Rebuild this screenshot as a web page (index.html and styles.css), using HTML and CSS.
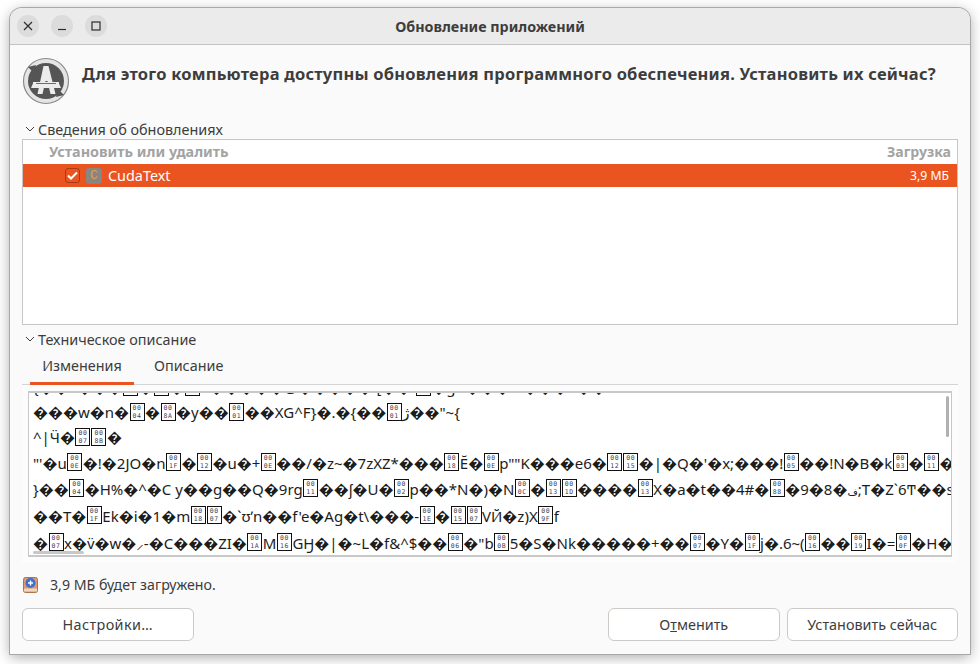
FILE: index.html
```html
<!DOCTYPE html>
<html lang="ru">
<head>
<meta charset="utf-8">
<title>Обновление приложений</title>
<link rel="stylesheet" href="styles.css">
</head>
<body>
<div class="window">
  <header class="titlebar">
    <div class="wm">
      <button class="wm-btn"><svg width="10" height="10" viewBox="0 0 10 10"><path d="M1 1l8 8M9 1l-8 8" class="wm-line"/></svg></button>
      <button class="wm-btn"><svg width="10" height="10" viewBox="0 0 10 10"><path d="M1 8.5h8" class="wm-line"/></svg></button>
      <button class="wm-btn"><svg width="10" height="10" viewBox="0 0 10 10"><rect x="1" y="1" width="8" height="8" class="wm-line"/></svg></button>
    </div>
    <div class="title">Обновление приложений</div>
  </header>
  <main class="content">
    <div class="head">
      <svg class="logo" width="48" height="48" viewBox="0 0 48 48">
        <circle cx="24" cy="24" r="22.5" fill="#e4e4e4" stroke="#8a8a8a" stroke-width="1.2"/>
        <circle cx="24" cy="24" r="18" fill="#555"/>
        <path d="M6 10l8-2-2 8zM42 38l-8 2 2-8z" fill="#555"/>
        <path d="M21.500 9h5l7 28h-5l-3-13h-2l-3 13h-5z" fill="#ececec"/>
        <path d="M11 25h26v1.500l2 4.500h-30l2-4.500z" fill="#ececec"/>
        <path d="M14 26.500h20" stroke="#d8432a" stroke-width="1"/>
      </svg>
      <h1 class="heading">Для этого компьютера доступны обновления программного обеспечения. Установить их сейчас?</h1>
    </div>

    <div class="expander expander-first">
      <svg class="chev" width="10" height="6" viewBox="0 0 10 6"><path d="M1 1l4 4 4-4"/></svg>
      <span>Сведения об обновлениях</span>
    </div>
    <section class="tree">
      <div class="tree-head">
        <span class="col-name">Установить или удалить</span>
        <span class="col-size">Загрузка</span>
      </div>
      <div class="tree-row">
        <span class="check"><svg width="11" height="9" viewBox="0 0 11 9"><path d="M1 4.500l3 3 6-6" fill="none" stroke="#fff" stroke-width="2"/></svg></span>
        <span class="pkg">C</span>
        <span class="pkg-name">CudaText</span>
        <span class="pkg-size">3,9 МБ</span>
      </div>
    </section>

    <div class="expander expander-second">
      <svg class="chev" width="10" height="6" viewBox="0 0 10 6"><path d="M1 1l4 4 4-4"/></svg>
      <span>Техническое описание</span>
    </div>
    <nav class="tabs">
      <span class="tab tab-active">Изменения</span>
      <span class="tab">Описание</span>
    </nav>
    <section class="notebook">
      <div class="log">
        <div class="lines">
          <div class="ln ln0">{��=���<span class="hx"><i>00</i><i>13</i></span>�<span class="hx"><i>00</i><i>05</i></span>�<span class="hx"><i>00</i><i>10</i></span>=�����@�����.[��.<span class="hx"><i>00</i><i>1A</i></span>�gC���=.���~��</div>
          <div class="ln ln1">���w�n�<span class="hx"><i>00</i><i>04</i></span>�<span class="hx"><i>00</i><i>8A</i></span>�y��<span class="hx"><i>00</i><i>01</i></span>��XG^F}�.�{��<span class="hx"><i>00</i><i>01</i></span><bdi>ژ</bdi>��"~{</div>
          <div class="ln ln2">^|Ӵ�<span class="hx"><i>00</i><i>07</i></span><span class="hx"><i>00</i><i>8B</i></span>�</div>
          <div class="ln ln3">"'�u<span class="hx"><i>00</i><i>0E</i></span>�!�2JO�n<span class="hx"><i>00</i><i>1F</i></span>�<span class="hx"><i>00</i><i>12</i></span>�u�+<span class="hx"><i>00</i><i>0E</i></span>��/�z~�7zXZ*���<span class="hx"><i>00</i><i>18</i></span>Ĕ�<span class="hx"><i>00</i><i>0E</i></span>p""K���e6�<span class="hx"><i>00</i><i>12</i></span><span class="hx"><i>00</i><i>15</i></span>�|�Q�'�x;���!<span class="hx"><i>00</i><i>05</i></span>��!N�B�k<span class="hx"><i>00</i><i>03</i></span>�<span class="hx"><i>00</i><i>11</i></span>�</div>
          <div class="ln">}��<span class="hx"><i>00</i><i>04</i></span>�H%�^�C y��g��Q�9rg<span class="hx"><i>00</i><i>11</i></span>��ʃ�U�<span class="hx"><i>00</i><i>02</i></span>p��*N�)�N<span class="hx"><i>00</i><i>0C</i></span>�<span class="hx"><i>00</i><i>13</i></span><span class="hx"><i>00</i><i>1D</i></span>����<span class="hx"><i>00</i><i>13</i></span>X�a�t��4#�<span class="hx"><i>00</i><i>88</i></span>�9�8�<bdi class="ar">ف</bdi>;T�Z`6Ͳ��s</div>
          <div class="ln">��T�<span class="hx"><i>00</i><i>1F</i></span>Ek�i�1�m<span class="hx"><i>00</i><i>18</i></span><span class="hx"><i>00</i><i>07</i></span>�`ʊʼn��f'e�Ag�t\���-<span class="hx"><i>00</i><i>1E</i></span>�<span class="hx"><i>00</i><i>15</i></span><span class="hx"><i>00</i><i>07</i></span>VЙ�z)X<span class="hx"><i>00</i><i>9F</i></span>f</div>
          <div class="ln ln3">�<span class="hx"><i>00</i><i>07</i></span>x�v̈�w�⸝-�C���ZI�<span class="hx"><i>00</i><i>1A</i></span>M<span class="hx"><i>00</i><i>16</i></span>GӇ�|�~L�f&amp;^$��<span class="hx"><i>00</i><i>06</i></span>�"b<span class="hx"><i>00</i><i>0B</i></span>5�S�Nk�����+��<span class="hx"><i>00</i><i>07</i></span>�Y�<span class="hx"><i>00</i><i>1F</i></span>j�.6~(<span class="hx"><i>00</i><i>16</i></span>��<span class="hx"><i>00</i><i>19</i></span>I�=<span class="hx"><i>00</i><i>0F</i></span>�H�</div>
        </div>
        <span class="sb-v"></span>
        <span class="sb-h"></span>
      </div>
    </section>

    <div class="status">
      <svg width="15" height="16" viewBox="0 0 15 16">
        <rect x="0.500" y="0.500" width="14" height="15" rx="2" fill="#dc9a6c" stroke="#a8754f"/>
        <rect x="1" y="11.500" width="13" height="3" fill="#f0d8c0"/>
        <circle cx="7.500" cy="6" r="5" fill="#3f6fd0"/>
        <path d="M7.500 3.500v5M5 6h5" stroke="#fff" stroke-width="1.400"/>
      </svg>
      <span class="status-text">3,9 МБ будет загружено.</span>
    </div>

    <footer class="actions">
      <button class="btn btn-settings">Настройки…</button>
      <div class="actions-right">
        <button class="btn">О<u>т</u>менить</button>
        <button class="btn">Установить сейчас</button>
      </div>
    </footer>
  </main>
</div>
</body>
</html>
```
FILE: styles.css
```css
* { box-sizing: border-box; }
html, body { margin: 0; height: 100%; }
body {
  background: #fff;
  padding: 8px 10px 10px;
  font-family: "Noto Sans", "DejaVu Sans", sans-serif;
  font-size: 14.400px;
  color: #3d3d3d;
  overflow: hidden;
}
.window {
  width: 960px;
  height: 646px;
  background: #fafafa;
  border-radius: 12px 12px 0 0;
  box-shadow: 0 0 0 1px #a8a8a8, 0 3px 14px rgba(0,0,0,.35);
  display: flex;
  flex-direction: column;
}
.titlebar {
  height: 37px;
  flex: none;
  display: flex;
  align-items: center;
  position: relative;
  background: #ebebeb;
  border-bottom: 1px solid #c4c4c4;
  border-radius: 12px 12px 0 0;
  padding-left: 7px;
}
.wm { display: flex; gap: 12px; }
.wm-btn {
  width: 22px; height: 22px;
  padding: 0; border: 0;
  border-radius: 50%;
  background: #dcdcdc;
  display: flex; align-items: center; justify-content: center;
}
.wm-line { fill: none; stroke: #2e2e2e; stroke-width: 1.200; }
.title {
  position: absolute; left: 0; right: 0; top: 0; bottom: 0;
  display: flex; align-items: center; justify-content: center;
  font-weight: 700; font-size: 14.300px;
}
.content {
  flex: 1;
  display: flex;
  flex-direction: column;
  padding: 0 12px 13px;
  min-height: 0;
}
.head {
  height: 74px;
  flex: none;
  display: flex;
  align-items: flex-start;
  padding-top: 12px;
  gap: 12px;
}
.logo { flex: none; }
.heading {
  margin: 5px 0 0;
  font-size: 16.500px;
  font-weight: 700;
  letter-spacing: .22px;
  line-height: 24px;
  white-space: nowrap;
}
.expander {
  display: flex;
  align-items: center;
  gap: 3px;
  padding-left: 3px;
  flex: none;
}
.expander-first { height: 20px; }
.expander-second { height: 25px; padding-top: 3px; }
.chev { fill: none; stroke: #3d3d3d; stroke-width: 1; flex: none; }
.tree {
  height: 186px;
  flex: none;
  background: #fff;
  border: 1px solid #c6c6c6;
  display: flex;
  flex-direction: column;
}
.tree-head {
  height: 24px;
  flex: none;
  display: flex;
  justify-content: space-between;
  align-items: center;
  padding: 0 6px 2px 26px;
  font-weight: 700;
  color: #a3a3a3;
}
.col-size { font-size: 14.100px; }
.tree-row {
  height: 23px;
  flex: none;
  display: flex;
  align-items: center;
  background: #e95420;
  color: #fff;
  padding: 0 8px 0 42px;
}
.check {
  width: 15px; height: 15px;
  border: 1px solid #a83a14;
  border-radius: 3px;
  display: flex; align-items: center; justify-content: center;
  flex: none;
}
.pkg {
  width: 16px; height: 16px;
  margin-left: 6px;
  background: #8a8580;
  border-radius: 3px;
  color: #e0a040;
  font: 400 13px/16px "Liberation Mono", monospace;
  text-align: center;
  flex: none;
}
.pkg-name { margin-left: 6px; }
.pkg-size { margin-left: auto; font-size: 12.200px; }
.tabs {
  height: 35px;
  flex: none;
  display: flex;
  border-bottom: 1px solid #d4d4d4;
  padding-left: 8px;
}
.tab {
  padding: 6px 12px 0;
  margin-right: 8px;
  height: 35px;
}
.tab-active {
  width: 104px;
  border-bottom: 3px solid #e95420;
  text-align: center;
  padding-left: 0; padding-right: 0;
}
.notebook {
  height: 178px;
  flex: none;
  background: #fcfcfc;
  padding: 6px 6px 6px 6px;
}
.log {
  position: relative;
  height: 166px;
  background: #fff;
  border: 1px solid #c8c8c8;
  border-top-width: 2px;
  border-bottom-width: 2px;
  overflow: hidden;
}
.lines {
  margin-top: -18px;
  padding-left: 4px;
  font-size: 15px;
  color: #1c1c1c;
  white-space: nowrap;
}
.ln { height: 27px; line-height: 27px; }
.ln0, .ln1, .ln2 { height: 25px; line-height: 25px; }
.ln3 { height: 26px; line-height: 26px; }
.ar { font-size: 10px; }
.hx {
  display: inline-block;
  width: 15px;
  height: 18px;
  margin: 3px .5px 0;
  padding-top: 1px;
  vertical-align: top;
  border: 1px solid #111;
  background: #fff;
}
.hx i {
  display: block;
  font: 400 6.500px/7.500px "DejaVu Sans Mono", monospace;
  letter-spacing: .6px;
  color: #445;
  text-align: center;
}
.sb-v {
  position: absolute;
  right: 2px; top: 3px;
  width: 3px; height: 41px;
  border-radius: 2px;
  background: #b0b0b0;
}
.sb-h {
  position: absolute;
  left: 4px; bottom: 1px;
  width: 51px; height: 3px;
  border-radius: 2px;
  background: #c8c8c8;
}
.status {
  height: 45px;
  flex: none;
  display: flex;
  align-items: center;
  gap: 12px;
  padding: 0 0 2px 1px;
}
.status-text { font-size: 14.200px; }
.actions {
  display: flex;
  justify-content: space-between;
  flex: none;
}
.actions-right { display: flex; gap: 7px; }
.btn {
  width: 171.500px;
  height: 33px;
  background: #fff;
  border: 1px solid #cdc9c6;
  border-radius: 6px;
  font: inherit;
  color: #3d3d3d;
  padding: 0;
}
.btn-settings { letter-spacing: .4px; }
```
